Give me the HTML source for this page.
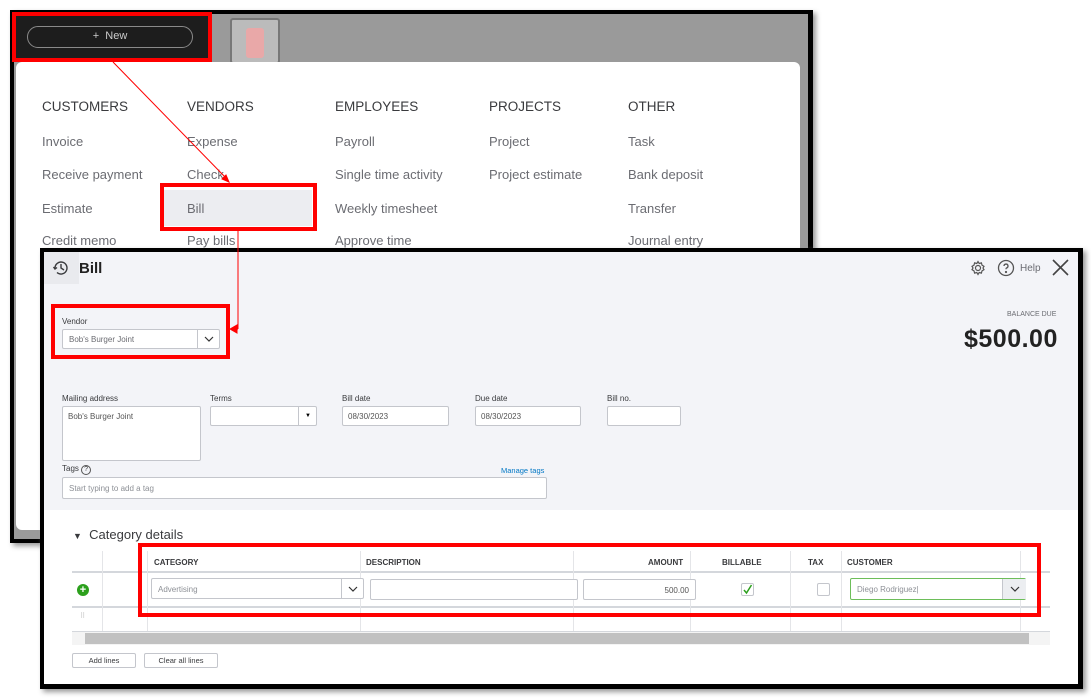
<!DOCTYPE html>
<html><head><meta charset="utf-8"><style>
*{box-sizing:border-box;margin:0;padding:0}
body{width:1091px;height:698px;background:#fff;position:relative;overflow:hidden;font-family:"Liberation Sans",sans-serif}
.a{position:absolute}
.m{font-size:13px;color:#6b6c72}
.h{font-size:13.5px;color:#393a3d}
.lbl{font-size:8px;color:#393a3d}
.inp{background:#fff;border:1px solid #c4c6cc;border-radius:2px;position:absolute}
.ph{font-size:8px;color:#8d9096}
.th{font-size:8px;font-weight:bold;color:#393a3d}
.chev{position:absolute;top:0;border-left:1px solid #c4c6cc;display:flex;align-items:center;justify-content:center}
</style></head><body>
<div class="a" style="left:10px;top:10px;width:803px;height:533px;background:#000;box-shadow:3px 3px 5px #999"></div>
<div class="a" style="left:14px;top:14px;width:794px;height:525px;background:#9a9a9a"></div>
<div class="a" style="left:14px;top:14px;width:196px;height:48px;background:#1d1d1d"></div>
<div class="a" style="left:27px;top:26px;width:166px;height:22px;border:1.5px solid #8a8a8a;border-radius:11px;color:#ccc;font-size:11px;text-align:center;line-height:19px">+&nbsp;&nbsp;New</div>
<div class="a" style="left:12px;top:12px;width:200px;height:50px;border:4px solid #f00"></div>
<div class="a" style="left:230px;top:18px;width:50px;height:46px;border:2px solid #777;border-radius:3px;background:#bbb"><div style="margin:8px 14px;width:18px;height:30px;background:#e9a8a8;border-radius:3px"></div></div>
<div class="a" style="left:16px;top:62px;width:784px;height:468px;background:#fff;border-radius:6px"></div>
<div class="a h" style="left:42px;top:99px">CUSTOMERS</div>
<div class="a h" style="left:187px;top:99px">VENDORS</div>
<div class="a h" style="left:335px;top:99px">EMPLOYEES</div>
<div class="a h" style="left:489px;top:99px">PROJECTS</div>
<div class="a h" style="left:628px;top:99px">OTHER</div>
<div class="a m" style="left:42px;top:134px">Invoice</div>
<div class="a m" style="left:42px;top:167px">Receive payment</div>
<div class="a m" style="left:42px;top:201px">Estimate</div>
<div class="a m" style="left:42px;top:233px">Credit memo</div>
<div class="a m" style="left:187px;top:134px">Expense</div>
<div class="a m" style="left:187px;top:167px">Check</div>
<div class="a" style="left:163px;top:190px;width:149px;height:36px;background:#ecedf1"></div>
<div class="a m" style="left:187px;top:201px">Bill</div>
<div class="a m" style="left:187px;top:233px">Pay bills</div>
<div class="a m" style="left:335px;top:134px">Payroll</div>
<div class="a m" style="left:335px;top:167px">Single time activity</div>
<div class="a m" style="left:335px;top:201px">Weekly timesheet</div>
<div class="a m" style="left:335px;top:233px">Approve time</div>
<div class="a m" style="left:489px;top:134px">Project</div>
<div class="a m" style="left:489px;top:167px">Project estimate</div>
<div class="a m" style="left:628px;top:134px">Task</div>
<div class="a m" style="left:628px;top:167px">Bank deposit</div>
<div class="a m" style="left:628px;top:201px">Transfer</div>
<div class="a m" style="left:628px;top:233px">Journal entry</div>
<div class="a" style="left:160px;top:183px;width:157px;height:48px;border:4px solid #f00"></div>
<div class="a" style="left:40px;top:248px;width:1043px;height:441px;background:#000;box-shadow:3px 3px 5px #999"></div>
<div class="a" style="left:44px;top:252px;width:1034px;height:432px;background:#fff"></div>
<div class="a" style="left:44px;top:252px;width:1034px;height:258px;background:#f3f4f8"></div>
<div class="a" style="left:44px;top:252px;width:35px;height:32px;background:#e9eaee"></div>
<svg class="a" style="left:52px;top:259px" width="18" height="18" viewBox="0 0 18 18" fill="none" stroke="#393a3d" stroke-width="1.4"><path d="M3 9a6 6 0 1 1 2 4.5"/><path d="M9 5v4l3 2"/><path d="M1.5 8l1.5 2 2-1.5"/></svg>
<div class="a" style="left:79px;top:260px;font-size:15px;font-weight:bold;color:#222">Bill</div>
<svg class="a" style="left:970px;top:260px" width="16" height="16" viewBox="0 0 16 16" fill="none" stroke="#555" stroke-width="1.2"><circle cx="8" cy="8" r="2.5"/><path d="M8 1.5l1.2 2 2.2-.6.6 2.2 2 1.2-1 1.7 1 1.7-2 1.2-.6 2.2-2.2-.6L8 14.5l-1.2-2-2.2.6-.6-2.2-2-1.2 1-1.7-1-1.7 2-1.2.6-2.2 2.2.6z"/></svg>
<svg class="a" style="left:997px;top:259px" width="18" height="18" viewBox="0 0 18 18" fill="none" stroke="#555" stroke-width="1.3"><circle cx="9" cy="9" r="7.5"/><path d="M7 7a2 2 0 1 1 2.5 2c-.5.2-.5.6-.5 1.3"/><circle cx="9" cy="13" r=".5" fill="#555"/></svg>
<div class="a" style="left:1020px;top:263px;font-size:10px;color:#6b6c72">Help</div>
<svg class="a" style="left:1052px;top:259px" width="17" height="17" viewBox="0 0 17 17" stroke="#444" stroke-width="1.6"><path d="M1 1l15 15M16 1L1 16"/></svg>
<div class="a" style="left:1007px;top:311px;font-size:7px;color:#6b6c72">BALANCE DUE</div>
<div class="a" style="left:964px;top:325px;font-size:25px;font-weight:bold;color:#222;letter-spacing:0.5px">$500.00</div>
<div class="a lbl" style="left:62px;top:317px">Vendor</div>
<div class="inp" style="left:62px;top:329px;width:158px;height:20px"><div class="ph" style="position:absolute;left:6px;top:5px;color:#6b6c72">Bob's Burger Joint</div><div class="chev" style="left:134px;height:18px;width:23px"><svg width="10" height="6"><path d="M1 1l4 4 4-4" stroke="#333" stroke-width="1.2" fill="none"/></svg></div></div>
<div class="a" style="left:51px;top:304px;width:179px;height:55px;border:4px solid #f00"></div>
<div class="a lbl" style="left:62px;top:394px">Mailing address</div>
<div class="inp" style="left:62px;top:406px;width:139px;height:55px"><div class="ph" style="position:absolute;left:5px;top:5px;color:#555">Bob's Burger Joint</div></div>
<div class="a lbl" style="left:210px;top:394px">Terms</div>
<div class="inp" style="left:210px;top:406px;width:107px;height:20px"><div style="position:absolute;left:87px;top:0;height:18px;width:19px;border-left:1px solid #c4c6cc;font-size:6px;text-align:center;line-height:18px">▼</div></div>
<div class="a lbl" style="left:342px;top:394px">Bill date</div>
<div class="inp" style="left:342px;top:406px;width:107px;height:20px"><div class="ph" style="position:absolute;left:5px;top:5px;color:#555">08/30/2023</div></div>
<div class="a lbl" style="left:475px;top:394px">Due date</div>
<div class="inp" style="left:475px;top:406px;width:106px;height:20px"><div class="ph" style="position:absolute;left:5px;top:5px;color:#555">08/30/2023</div></div>
<div class="a lbl" style="left:607px;top:394px">Bill no.</div>
<div class="inp" style="left:607px;top:406px;width:74px;height:20px"></div>
<div class="a lbl" style="left:62px;top:464px">Tags <span style="display:inline-block;width:10px;height:10px;border:1px solid #555;border-radius:50%;font-size:7px;text-align:center;line-height:8px">?</span></div>
<div class="a" style="left:501px;top:466px;font-size:7.5px;color:#0077c5">Manage tags</div>
<div class="inp" style="left:62px;top:477px;width:485px;height:22px"><div class="ph" style="position:absolute;left:6px;top:6px">Start typing to add a tag</div></div>
<div class="a" style="left:73px;top:527px;font-size:13px;color:#393a3d"><span style="font-size:9px">▼</span>&nbsp; Category details</div>
<div class="a" style="left:72px;top:571px;width:978px;height:2px;background:#d4d7dc"></div>
<div class="a" style="left:72px;top:606px;width:978px;height:2px;background:#d4d7dc"></div>
<div class="a" style="left:72px;top:631px;width:978px;height:1px;background:#d4d7dc"></div>
<div class="a" style="left:102px;top:551px;width:1px;height:80px;background:#e4e5e8"></div>
<div class="a" style="left:147px;top:551px;width:1px;height:80px;background:#e4e5e8"></div>
<div class="a" style="left:360px;top:551px;width:1px;height:80px;background:#e4e5e8"></div>
<div class="a" style="left:573px;top:551px;width:1px;height:80px;background:#e4e5e8"></div>
<div class="a" style="left:690px;top:551px;width:1px;height:80px;background:#e4e5e8"></div>
<div class="a" style="left:790px;top:551px;width:1px;height:80px;background:#e4e5e8"></div>
<div class="a" style="left:841px;top:551px;width:1px;height:80px;background:#e4e5e8"></div>
<div class="a" style="left:1020px;top:551px;width:1px;height:80px;background:#e4e5e8"></div>
<div class="a th" style="left:154px;top:558px">CATEGORY</div>
<div class="a th" style="left:366px;top:558px">DESCRIPTION</div>
<div class="a th" style="left:648px;top:558px">AMOUNT</div>
<div class="a th" style="left:722px;top:558px">BILLABLE</div>
<div class="a th" style="left:808px;top:558px">TAX</div>
<div class="a th" style="left:847px;top:558px">CUSTOMER</div>
<div class="a" style="left:77px;top:584px;width:12px;height:12px;border-radius:50%;background:#2ca01c;color:#fff;font-size:11px;font-weight:bold;text-align:center;line-height:12px">+</div>
<div class="inp" style="left:151px;top:578px;width:213px;height:21px"><div class="ph" style="position:absolute;left:6px;top:6px">Advertising</div><div class="chev" style="left:189px;height:19px;width:23px"><svg width="10" height="6"><path d="M1 1l4 4 4-4" stroke="#333" stroke-width="1.2" fill="none"/></svg></div></div>
<div class="inp" style="left:370px;top:579px;width:208px;height:21px"></div>
<div class="inp" style="left:583px;top:579px;width:113px;height:21px"><div class="ph" style="position:absolute;right:6px;top:6px;color:#555">500.00</div></div>
<div class="inp" style="left:741px;top:583px;width:13px;height:13px"><svg width="11" height="11" viewBox="0 0 11 11" style="position:absolute;left:0;top:0"><path d="M2 6l2.5 3L9.5 1" stroke="#2ca01c" stroke-width="1.5" fill="none"/></svg></div>
<div class="inp" style="left:817px;top:583px;width:13px;height:13px"></div>
<div class="inp" style="left:850px;top:578px;width:176px;height:22px;border-color:#6dbe5a"><div class="ph" style="position:absolute;left:6px;top:6px">Diego Rodriguez|</div><div class="chev" style="left:151px;height:20px;width:24px;background:#eceef1"><svg width="10" height="6"><path d="M1 1l4 4 4-4" stroke="#333" stroke-width="1.2" fill="none"/></svg></div></div>
<div class="a" style="left:80px;top:612px;font-size:7px;color:#bbb">⠿</div>
<div class="a" style="left:72px;top:632px;width:978px;height:13px;background:#f4f4f4"></div>
<div class="a" style="left:85px;top:633px;width:944px;height:11px;background:#c1c1c1"></div>
<div class="inp" style="left:72px;top:653px;width:64px;height:15px;font-size:7.5px;text-align:center;line-height:13px;color:#393a3d">Add lines</div>
<div class="inp" style="left:144px;top:653px;width:74px;height:15px;font-size:7.5px;text-align:center;line-height:13px;color:#393a3d">Clear all lines</div>
<div class="a" style="left:138px;top:543px;width:903px;height:74px;border:4px solid #f00"></div>
<svg class="a" style="left:0;top:0" width="1091" height="698"><g stroke="#f00" stroke-width="1" fill="#f00"><line x1="113" y1="62" x2="226" y2="178"/><path d="M229 182l-7-3 4-4z"/><line x1="238" y1="231" x2="238" y2="329"/><line x1="238" y1="329" x2="236" y2="329"/><path d="M230 329l7-4v8z"/></g></svg>
</body></html>
